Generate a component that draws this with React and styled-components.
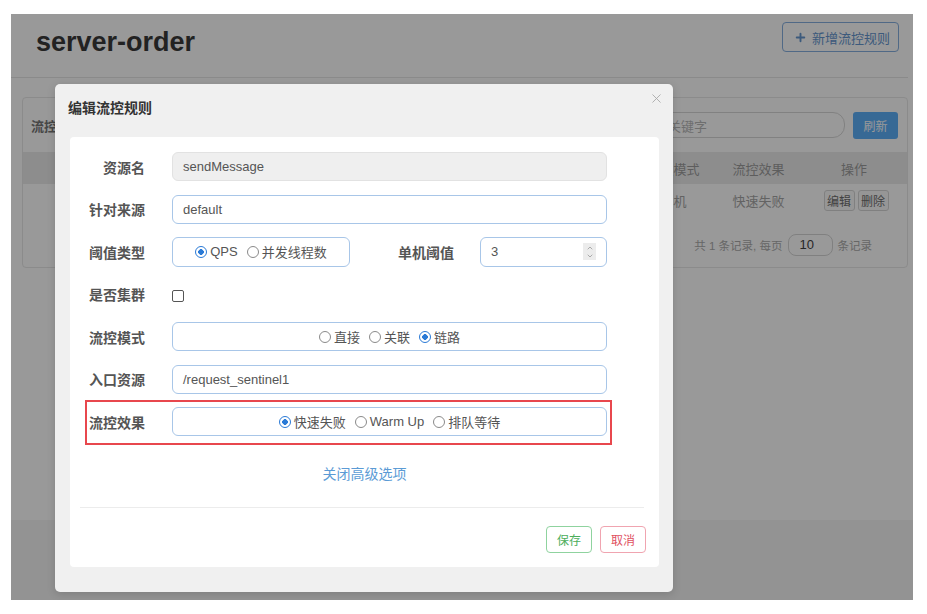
import React from 'react';
import styled, { createGlobalStyle } from 'styled-components';
import { Plus, X, ChevronUp, ChevronDown } from 'lucide-react';

const GlobalStyle = createGlobalStyle`
  html, body {
    margin: 0;
    padding: 0;
    background: #fff;
  }
  body {
    font-family: "Liberation Sans", "Noto Sans CJK SC", sans-serif;
    color: #555;
  }
  * {
    box-sizing: border-box;
  }
`;

const Frame = styled.div`
  width: 927px;
  height: 614px;
  padding: 14px 14px 14px 11px;
  background: #fff;
`;

const Screen = styled.div`
  position: relative;
  width: 902px;
  height: 586px;
  overflow: hidden;
  background: #fff;
  display: flex;
  flex-direction: column;
`;

/* ---------- page behind the dialog ---------- */

const PageHeader = styled.div`
  display: flex;
  justify-content: space-between;
  align-items: flex-start;
  height: 64px;
  margin-right: 5px;
  padding: 8px 9px 0 25px;
  border-bottom: 1px solid #e6e6e6;
`;

const PageTitle = styled.h1`
  margin: 4px 0 0;
  font-size: 27px;
  line-height: 32px;
  font-weight: 700;
  color: #3a3a3a;
`;

const OutlineButton = styled.button`
  display: flex;
  align-items: center;
  gap: 5px;
  width: 117px;
  height: 30px;
  padding: 0 0 0 11px;
  border: 1px solid #86afe0;
  border-radius: 4px;
  background: #fff;
  color: #6596cf;
  font-family: inherit;
  font-size: 13px;
`;

const Panel = styled.div`
  margin: 19px 5px 0 11px;
  height: 171px;
  border: 1px solid #e8e8e8;
  border-radius: 4px;
  background: #fff;
`;

const PanelBar = styled.div`
  display: flex;
  align-items: center;
  height: 54px;
  padding: 0 9px 0 8px;
`;

const PanelHeading = styled.span`
  font-size: 13px;
  font-weight: 700;
  color: #777;
`;

const SearchInput = styled.div`
  margin-left: auto;
  display: flex;
  align-items: center;
  width: 190px;
  height: 26px;
  padding-left: 12px;
  border: 1px solid #d8d8d8;
  border-radius: 12px;
  font-size: 13px;
  color: #b8b8b8;
`;

const PrimaryButton = styled.button`
  margin-left: 8px;
  width: 45px;
  height: 27px;
  border: none;
  border-radius: 3px;
  background: #5daff8;
  color: #fff;
  font-family: inherit;
  font-size: 12px;
`;

const TableRow = styled.div`
  display: grid;
  grid-template-columns: 608px 85px 85px 1fr;
  align-items: center;
  height: ${(p) => p.$height}px;
  background: ${(p) => (p.$head ? '#ececec' : 'transparent')};
`;

const Cell = styled.div`
  text-align: center;
  font-size: 13px;
  color: ${(p) => (p.$head ? '#9c9c9c' : '#a6a6a6')};
`;

const Actions = styled.div`
  display: flex;
  justify-content: center;
  gap: 3px;
  padding-left: 4px;
`;

const SmallButton = styled.button`
  width: 31px;
  height: 21px;
  padding: 0;
  border: 1px solid #d6d6d6;
  border-radius: 3px;
  background: #fafafa;
  color: #6e6e6e;
  font-family: inherit;
  font-size: 12px;
`;

const Pager = styled.div`
  display: flex;
  justify-content: flex-end;
  align-items: center;
  gap: 5px;
  margin-top: 18px;
  padding-right: 35px;
  font-size: 11.5px;
  color: #ababab;
`;

const PageSize = styled.div`
  width: 45px;
  height: 22px;
  padding-left: 11px;
  line-height: 20px;
  border: 1px solid #d6d6d6;
  border-radius: 8px;
  font-size: 13px;
  color: #444;
`;

const Spacer = styled.div`
  flex: 1;
`;

const FooterBand = styled.div`
  height: 80px;
  background: #f5f5f5;
`;

const Backdrop = styled.div`
  position: absolute;
  inset: 0;
  background: rgba(0, 0, 0, 0.4);
`;

/* ---------- dialog ---------- */

const Dialog = styled.div`
  position: absolute;
  left: 44px;
  top: 70px;
  width: 618px;
  height: 508px;
  border-radius: 5px;
  background: #f0f0f0;
  box-shadow: 0 2px 8px rgba(0, 0, 0, 0.15);
`;

const DialogHead = styled.div`
  position: relative;
  height: 53px;
  padding: 14px 0 0 13px;
`;

const DialogTitle = styled.h3`
  margin: 0;
  font-size: 14px;
  line-height: 20px;
  font-weight: 700;
  color: #333;
`;

const Close = styled.span`
  position: absolute;
  right: 9px;
  top: 7px;
  color: #a8a8a8;
  display: flex;
`;

const Card = styled.div`
  margin-left: 15px;
  width: 589px;
  height: 430px;
  padding-top: 15px;
  border-radius: 4px;
  background: #fff;
`;

const Rows = styled.div`
  display: flex;
  flex-direction: column;
  gap: 13.5px;
`;

const Row = styled.div`
  position: relative;
  display: flex;
  align-items: center;
  gap: 27px;
  margin-left: 15px;
  width: 527px;
  height: 29px;
  padding-right: 5px;

  ${(p) =>
    p.$marked &&
    `
    &::after {
      content: '';
      position: absolute;
      left: 0;
      right: 0;
      top: -7px;
      bottom: -9px;
      border: 2px solid #e8474d;
      pointer-events: none;
    }
  `}
`;

const Label = styled.label`
  width: ${(p) => p.$width || 60}px;
  flex-shrink: 0;
  text-align: right;
  font-size: 14px;
  font-weight: 700;
  color: #555;
`;

const Input = styled.div`
  display: flex;
  align-items: center;
  width: ${(p) => p.$width || 435}px;
  height: ${(p) => p.$height || 29}px;
  padding: 0 10px;
  border: 1px solid ${(p) => (p.$disabled ? '#e2e2e2' : '#a8c6e8')};
  border-radius: 6px;
  background: ${(p) => (p.$disabled ? '#efefef' : '#fff')};
  font-size: 13px;
  color: #555;
`;

const Split = styled.div`
  display: flex;
  align-items: center;
  width: 435px;
`;

const Spin = styled.span`
  margin-left: auto;
  display: flex;
  flex-direction: column;
  align-items: center;
  width: 13px;
  height: 17px;
  padding-top: 1px;
  background: #ececec;
  color: #888;
`;

const RadioBox = styled.div`
  display: flex;
  justify-content: center;
  align-items: center;
  gap: 9px;
  width: ${(p) => p.$width || 435}px;
  height: ${(p) => p.$height || 29}px;
  border: 1px solid #a8c6e8;
  border-radius: 6px;
`;

const Option = styled.span`
  display: flex;
  align-items: center;
  gap: 3px;
  font-size: 13px;
  color: #555;
`;

const Dot = styled.span`
  width: 12px;
  height: 12px;
  border-radius: 50%;
  border: ${(p) => (p.$on ? '1.5px solid #2a7ad6' : '1px solid #8a8a8a')};
  background: ${(p) =>
    p.$on ? 'radial-gradient(circle, #2a7ad6 0 2.6px, #fff 3px)' : '#fff'};
`;

const Check = styled.span`
  width: 12px;
  height: 12px;
  margin-top: 3px;
  border: 1.5px solid #555;
  border-radius: 2px;
`;

const Toggle = styled.div`
  margin-top: 28px;
  text-align: center;
  font-size: 14px;
  line-height: 20px;
  color: #5b9bd5;
`;

const Divider = styled.hr`
  margin: 23px 15px 0 10px;
  border: none;
  border-top: 1px solid #ececec;
`;

const Footer = styled.div`
  display: flex;
  justify-content: flex-end;
  gap: 8px;
  margin-top: 18px;
  padding-right: 13px;
`;

const FooterButton = styled.button`
  width: 46px;
  height: 27px;
  padding: 0;
  border: 1px solid ${(p) => (p.$tone === 'ok' ? '#8fd39f' : '#f0a4b0')};
  border-radius: 4px;
  background: #fff;
  color: ${(p) => (p.$tone === 'ok' ? '#4cae5c' : '#e0505f')};
  font-family: inherit;
  font-size: 12px;
`;

const Radio = ({ on, children }) => (
  <Option>
    <Dot $on={on} />
    {children}
  </Option>
);

const App = () => (
  <Frame>
    <GlobalStyle />
    <Screen>
      <PageHeader>
        <PageTitle>server-order</PageTitle>
        <OutlineButton>
          <Plus size={13} strokeWidth={3.5} />
          新增流控规则
        </OutlineButton>
      </PageHeader>
      <Panel>
        <PanelBar>
          <PanelHeading>流控规则</PanelHeading>
          <SearchInput>关键字</SearchInput>
          <PrimaryButton>刷新</PrimaryButton>
        </PanelBar>
        <TableRow $head $height={32}>
          <Cell $head />
          <Cell $head>阈值模式</Cell>
          <Cell $head>流控效果</Cell>
          <Cell $head>操作</Cell>
        </TableRow>
        <TableRow $height={32}>
          <Cell />
          <Cell>单机</Cell>
          <Cell>快速失败</Cell>
          <Actions>
            <SmallButton>编辑</SmallButton>
            <SmallButton>删除</SmallButton>
          </Actions>
        </TableRow>
        <Pager>
          共 1 条记录, 每页
          <PageSize>10</PageSize>
          条记录
        </Pager>
      </Panel>
      <Spacer />
      <FooterBand />

      <Backdrop />

      <Dialog>
        <DialogHead>
          <DialogTitle>编辑流控规则</DialogTitle>
          <Close>
            <X size={15} strokeWidth={1.4} />
          </Close>
        </DialogHead>
        <Card>
          <Rows>
            <Row>
              <Label>资源名</Label>
              <Input $disabled>sendMessage</Input>
            </Row>
            <Row>
              <Label>针对来源</Label>
              <Input>default</Input>
            </Row>
            <Row>
              <Label>阈值类型</Label>
              <Split>
                <RadioBox $width={178} $height={30}>
                  <Radio on>QPS</Radio>
                  <Radio>并发线程数</Radio>
                </RadioBox>
                <Label $width={104}>单机阈值</Label>
                <Spacer />
                <Input $width={127} $height={30}>
                  3
                  <Spin>
                    <ChevronUp size={8} strokeWidth={2} />
                    <ChevronDown size={8} strokeWidth={2} />
                  </Spin>
                </Input>
              </Split>
            </Row>
            <Row>
              <Label>是否集群</Label>
              <Check />
            </Row>
            <Row>
              <Label>流控模式</Label>
              <RadioBox>
                <Radio>直接</Radio>
                <Radio>关联</Radio>
                <Radio on>链路</Radio>
              </RadioBox>
            </Row>
            <Row>
              <Label>入口资源</Label>
              <Input>/request_sentinel1</Input>
            </Row>
            <Row $marked>
              <Label>流控效果</Label>
              <RadioBox>
                <Radio on>快速失败</Radio>
                <Radio>Warm Up</Radio>
                <Radio>排队等待</Radio>
              </RadioBox>
            </Row>
          </Rows>
          <Toggle>关闭高级选项</Toggle>
          <Divider />
          <Footer>
            <FooterButton $tone="ok">保存</FooterButton>
            <FooterButton $tone="cancel">取消</FooterButton>
          </Footer>
        </Card>
      </Dialog>
    </Screen>
  </Frame>
);

export default App;
